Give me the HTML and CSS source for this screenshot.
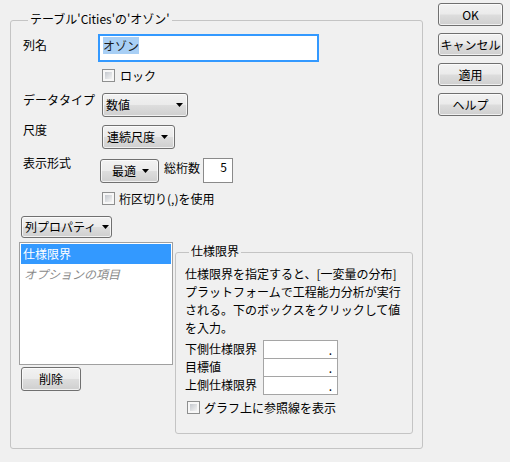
FILE: index.html
```html
<!DOCTYPE html>
<html lang="ja">
<head>
<meta charset="utf-8">
<title>列情報</title>
<link rel="stylesheet" href="styles.css">
</head>
<body>
<div class="dialog">
  <fieldset class="main">
    <legend>テーブル'Cities'の'オゾン'</legend>

    <div class="row r-name">
      <span class="label l-name">列名</span>
      <div class="textbox"><span class="sel">オゾン</span></div>
    </div>

    <div class="row r-lock">
      <span class="cb"></span><span class="cb-text">ロック</span>
    </div>

    <div class="row r-type">
      <span class="label l-type">データタイプ</span>
      <div class="combo c-type"><span>数値</span><svg class="arrow" width="7" height="4" viewBox="0 0 7 4"><path d="M0 0H7L3.5 4Z"/></svg></div>
    </div>

    <div class="row r-scale">
      <span class="label l-scale">尺度</span>
      <div class="combo c-scale"><span>連続尺度</span><svg class="arrow" width="7" height="4" viewBox="0 0 7 4"><path d="M0 0H7L3.5 4Z"/></svg></div>
    </div>

    <div class="row r-fmt">
      <span class="label l-fmt">表示形式</span>
      <div class="combo c-fmt"><span>最適</span><svg class="arrow" width="7" height="4" viewBox="0 0 7 4"><path d="M0 0H7L3.5 4Z"/></svg></div>
      <span class="digits-label">総桁数</span>
      <div class="numbox">5</div>
    </div>

    <div class="row r-sep">
      <span class="cb"></span><span class="cb-text t-sep">桁区切り(,)を使用</span>
    </div>

    <div class="row r-prop">
      <div class="combo c-prop"><span>列プロパティ</span><svg class="arrow" width="7" height="4" viewBox="0 0 7 4"><path d="M0 0H7L3.5 4Z"/></svg></div>
    </div>

    <div class="bottom">
      <div class="left-col">
        <ul class="listbox">
          <li class="item selected">仕様限界</li>
          <li class="item placeholder">オプションの項目</li>
        </ul>
        <button class="btn del">削除</button>
      </div>

      <fieldset class="spec">
        <legend>仕様限界</legend>
        <p class="desc">仕様限界を指定すると、[一変量の分布]プラットフォームで工程能力分析が実行される。下のボックスをクリックして値を入力。</p>
        <div class="limits">
          <div class="limit"><span class="lim-label">下側仕様限界</span><div class="limbox">.</div></div>
          <div class="limit"><span class="lim-label">目標値</span><div class="limbox">.</div></div>
          <div class="limit"><span class="lim-label">上側仕様限界</span><div class="limbox">.</div></div>
        </div>
        <div class="ref-row">
          <span class="cb"></span><span class="cb-text t-ref">グラフ上に参照線を表示</span>
        </div>
      </fieldset>
    </div>
  </fieldset>

  <div class="buttons">
    <button class="btn side">OK</button>
    <button class="btn side">キャンセル</button>
    <button class="btn side">適用</button>
    <button class="btn side">ヘルプ</button>
  </div>
</div>
</body>
</html>
```

FILE: styles.css
```css
html, body {
  margin: 0;
  padding: 0;
}

body {
  background: #f0f0f0;
  font-family: "Noto Sans CJK JP", "Noto Sans", sans-serif;
  font-size: 12px;
  line-height: 16px;
  color: #000;
  width: 510px;
  height: 462px;
  overflow: hidden;
}

.dialog {
  display: flex;
  align-items: flex-start;
}

/* ---------- group boxes ---------- */
fieldset {
  box-sizing: border-box;
  margin: 0;
  border: 1px solid #c4c4c4;
  border-radius: 3px;
  min-inline-size: 0;
}

legend {
  line-height: 17px;
  padding: 0 2px 4px;
}

.main {
  margin: 10px 0 0 10px;
  width: 413px;
  height: 439px;
  padding: 3px 0 0 12px;
}

.main > legend {
  margin-left: 5px;
}

/* ---------- rows ---------- */
.row {
  display: flex;
  align-items: flex-start;
}

.label {
  width: 79px;
  flex: none;
}

.r-name { height: 28px; }
.l-name { width: 75px; margin-top: 3px; }

.r-lock {
  margin-top: 7px;
  height: 13px;
  padding-left: 79px;
  align-items: center;
}

.r-type { margin-top: 11px; height: 24px; }
.l-type { margin-top: -1px; }

.r-scale { margin-top: 8px; height: 24px; }
.l-scale { margin-top: -3px; }

.r-fmt { margin-top: 9px; height: 25px; }
.l-fmt { margin-top: -3px; }

.r-sep {
  margin-top: 9px;
  height: 13px;
  padding-left: 79px;
  align-items: center;
}

.r-prop { margin-top: 11px; height: 22px; }

/* ---------- text box ---------- */
.textbox {
  box-sizing: border-box;
  width: 221px;
  height: 28px;
  border: 2px solid #3399ff;
  background: #fff;
  padding: 2px 3px;
}

.sel {
  background: #a8cff5;
  color: #1a1a1a;
}

/* ---------- checkbox ---------- */
.cb {
  box-sizing: border-box;
  flex: none;
  width: 13px;
  height: 13px;
  border: 1px solid #8e8f8f;
  padding: 2px;
  background: linear-gradient(135deg, #c4c8ce, #f3f3f3) content-box, #f7f7f7;
}

.cb-text { margin-left: 5px; }
.t-sep { margin-left: 4px; }

/* ---------- combo / buttons ---------- */
.combo, .btn {
  box-sizing: border-box;
  border: 1px solid #707070;
  border-radius: 3px;
  background: linear-gradient(#f2f2f2 0%, #ebebeb 48%, #dddddd 52%, #cfcfcf 100%);
  box-shadow: inset 0 0 0 1px rgba(255, 255, 255, 0.7);
  font: inherit;
  color: #000;
}

.combo {
  display: flex;
  align-items: center;
  height: 24px;
  flex: none;
}

.arrow {
  display: block;
  fill: #000;
  flex: none;
}

.c-type {
  width: 86px;
  justify-content: space-between;
  padding: 0 4px 0 3px;
}

.c-scale {
  width: 73px;
  justify-content: space-between;
  padding: 0 6px 0 4px;
}

.c-fmt {
  width: 59px;
  margin-top: 1px;
  margin-left: -2px;
  padding-left: 11px;
  gap: 6px;
}

.c-prop {
  width: 91px;
  height: 22px;
  margin-left: -2px;
  justify-content: space-between;
  padding: 0 2px 0 3px;
}

.digits-label {
  margin-left: 5px;
  margin-top: 2px;
}

.numbox {
  box-sizing: border-box;
  width: 30px;
  height: 25px;
  margin-left: 3px;
  border: 1px solid #8a8a8a;
  background: #fff;
  text-align: right;
  padding: 0 5px 0 0;
}

/* ---------- bottom area ---------- */
.bottom {
  display: flex;
  align-items: flex-start;
  margin-top: 4px;
  margin-left: -4px;
}

.left-col {
  width: 154px;
  flex: none;
  display: flex;
  flex-direction: column;
  align-items: flex-start;
}

.listbox {
  box-sizing: border-box;
  list-style: none;
  margin: 0;
  width: 154px;
  height: 123px;
  border: 1px solid #a0a0a0;
  background: #fff;
  padding: 1px;
}

.item {
  height: 20px;
  line-height: 20px;
  padding-left: 2px;
}

.selected {
  background: #3399ff;
  color: #fff;
}

.placeholder {
  font-style: italic;
  color: #8a8a8a;
  padding-left: 3px;
}

.btn {
  display: flex;
  align-items: center;
  justify-content: center;
  padding: 0;
  line-height: 16px;
  white-space: nowrap;
}

.del {
  width: 60px;
  height: 24px;
  margin: 2px 0 0 2px;
}

.spec {
  width: 238px;
  height: 192px;
  margin-left: 2px;
  padding: 2px 8px 0 9px;
}

.spec > legend {
  margin-left: 4px;
}

.desc {
  margin: 0;
  line-height: 18px;
}

.limits {
  margin-top: 3px;
  display: flex;
  flex-direction: column;
}

.limit {
  display: flex;
  align-items: flex-start;
  height: 19px;
}

.limit + .limit {
  margin-top: -1px;
}

.lim-label {
  width: 78px;
  flex: none;
  line-height: 17px;
}

.limbox {
  box-sizing: border-box;
  width: 75px;
  height: 19px;
  border: 1px solid #a5a5a5;
  background: #fff;
  text-align: right;
  padding-right: 5px;
  line-height: 17px;
}

.ref-row {
  display: flex;
  align-items: center;
  margin-top: 6px;
  padding-left: 2px;
  height: 13px;
}

.t-ref { margin-left: 4px; }

/* ---------- side buttons ---------- */
.buttons {
  display: flex;
  flex-direction: column;
  gap: 7px;
  margin-left: 15px;
  padding-top: 3px;
}

.side {
  width: 65px;
  height: 23px;
}
```
